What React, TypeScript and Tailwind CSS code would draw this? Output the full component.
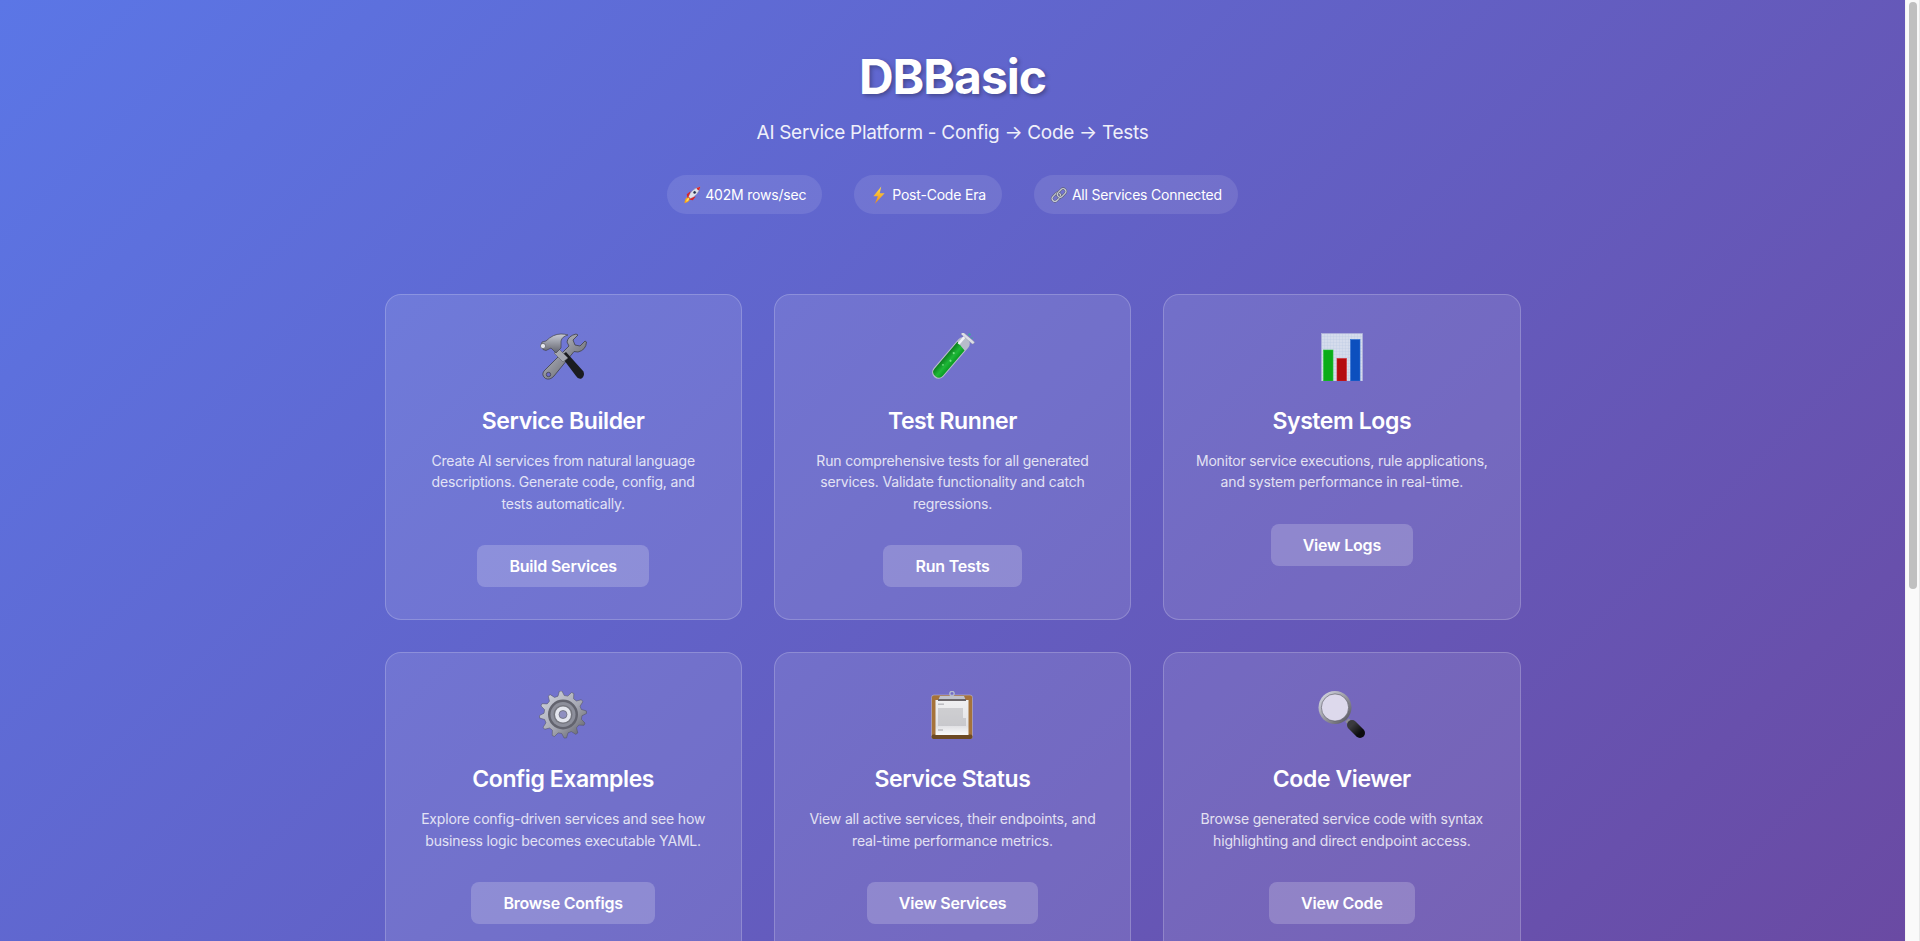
const badges = [
  { icon: <RocketIcon />, label: "402M rows/sec" },
  { icon: <BoltIcon />, label: "Post-Code Era" },
  { icon: <LinkIcon />, label: "All Services Connected" },
];

const cards = [
  {
    icon: <ToolsIcon />,
    title: "Service Builder",
    text: "Create AI services from natural language descriptions. Generate code, config, and tests automatically.",
    action: "Build Services",
  },
  {
    icon: <TubeIcon />,
    title: "Test Runner",
    text: "Run comprehensive tests for all generated services. Validate functionality and catch regressions.",
    action: "Run Tests",
  },
  {
    icon: <ChartIcon />,
    title: "System Logs",
    text: "Monitor service executions, rule applications, and system performance in real-time.",
    action: "View Logs",
  },
  {
    icon: <GearIcon />,
    title: "Config Examples",
    text: "Explore config-driven services and see how business logic becomes executable YAML.",
    action: "Browse Configs",
  },
  {
    icon: <ClipboardIcon />,
    title: "Service Status",
    text: "View all active services, their endpoints, and real-time performance metrics.",
    action: "View Services",
  },
  {
    icon: <SearchIcon />,
    title: "Code Viewer",
    text: "Browse generated service code with syntax highlighting and direct endpoint access.",
    action: "View Code",
  },
];

function ToolsIcon() {
  return (
    <svg viewBox="0 0 48 48" className="h-12 w-12">
      <defs>
        <linearGradient id="steel" x1="0" y1="0" x2="1" y2="1">
          <stop offset="0" stopColor="#d8dbe2" />
          <stop offset="0.5" stopColor="#8d8f98" />
          <stop offset="1" stopColor="#55565e" />
        </linearGradient>
        <linearGradient id="hammerHead" x1="0" y1="0" x2="0" y2="1">
          <stop offset="0" stopColor="#c9ccd6" />
          <stop offset="1" stopColor="#5f616b" />
        </linearGradient>
      </defs>
      <path
        d="M7 36 L30 13 L28 9 Q29 3 37 1 L39 2 L34 7 L36 12 L41 13 L46 8 L47.5 9 Q47 17 39 19 L35 18.5 L15 43 Q11 47.5 6.5 45.5 Q2 42 5 38 Z"
        fill="url(#steel)"
        stroke="#3f4048"
        strokeWidth="0.8"
      />
      <circle cx="9.5" cy="41.5" r="2.2" fill="#6c6aca" stroke="#3f4048" strokeWidth="0.8" />
      <path d="M22 23 L27 19 L44.5 38.5 Q46 43 42.5 45.5 Q39 46.5 37 43 Z" fill="#1b1c20" />
      <path d="M15 20 L20 16 L29 25 L24 29 Z" fill="#a5a7b0" stroke="#55565e" strokeWidth="0.5" />
      <path
        d="M3 9 L7 8 Q14 1 22 1 Q26 1 29 2 Q23 3.5 22 8 L22 15 L17 20 L12 15 L7 17.5 L4 16.5 Q1 13 3 9 Z"
        fill="url(#hammerHead)"
        stroke="#43444c"
        strokeWidth="0.7"
      />
      <circle cx="4" cy="13" r="2.6" fill="#e5e7ee" stroke="#4a4b53" strokeWidth="0.6" />
    </svg>
  );
}

function TubeIcon() {
  return (
    <svg viewBox="0 0 48 48" className="h-12 w-12">
      <defs>
        <linearGradient id="liquid" x1="0" y1="0" x2="1" y2="0">
          <stop offset="0" stopColor="#0b7f1e" />
          <stop offset="0.55" stopColor="#1fb838" />
          <stop offset="1" stopColor="#0a9c23" />
        </linearGradient>
      </defs>
      <g transform="translate(39.5 5.5) rotate(40.5)">
        <rect x="-6.5" y="0" width="13" height="51" rx="6.5" fill="#b7bccb" />
        <rect x="-8" y="-2" width="16" height="3" rx="1.2" fill="#dcdee6" stroke="#8f92a0" strokeWidth="0.4" />
        <path d="M-5.5 9 L5.5 11 L5.5 44 Q5.5 49.5 0 49.5 Q-5.5 49.5 -5.5 44 Z" fill="url(#liquid)" />
        <circle cx="-1" cy="20" r="1.1" fill="#74e083" />
        <circle cx="1.5" cy="28" r="1.1" fill="#74e083" />
        <circle cx="-1.5" cy="36" r="0.9" fill="#74e083" />
        <rect x="-4.5" y="1" width="2.4" height="9" fill="#f0f1f6" />
      </g>
      <circle cx="41.5" cy="1.5" r="1.2" fill="#3aa89a" />
      <circle cx="44" cy="5" r="0.8" fill="#3aa89a" />
    </svg>
  );
}

function ChartIcon() {
  return (
    <svg viewBox="0 0 48 48" className="h-12 w-12">
      <defs>
        <pattern id="chartGrid" width="3" height="3" patternUnits="userSpaceOnUse">
          <rect width="3" height="3" fill="#d5dcec" />
          <path d="M0 0H3M0 0V3" stroke="#bdcae2" strokeWidth="0.7" />
        </pattern>
      </defs>
      <rect x="3.5" y="0.5" width="41" height="47.5" fill="url(#chartGrid)" stroke="#b4b8dc" strokeWidth="0.6" />
      <rect x="5.5" y="17" width="9.5" height="31" fill="#0bac19" stroke="#27c638" strokeWidth="0.6" />
      <rect x="19" y="25.5" width="9.5" height="22.5" fill="#b40b0f" stroke="#d3262c" strokeWidth="0.6" />
      <rect x="32.5" y="6.5" width="9.5" height="41.5" fill="#0c4fbe" stroke="#2c6fd6" strokeWidth="0.6" />
    </svg>
  );
}

function gearPath() {
  const cx = 24;
  const cy = 23.5;
  const points: string[] = [];
  const teeth = 12;
  for (let i = 0; i < teeth; i++) {
    const a = (i / teeth) * Math.PI * 2 - 0.1;
    const step = (Math.PI * 2) / teeth;
    const pts: [number, number][] = [
      [a - step * 0.32, 19],
      [a - step * 0.1, 23.6],
      [a + step * 0.1, 23.6],
      [a + step * 0.32, 19],
    ];
    for (const [angle, r] of pts) {
      points.push(`${(cx + Math.cos(angle) * r).toFixed(2)} ${(cy + Math.sin(angle) * r).toFixed(2)}`);
    }
  }
  return `M${points.join(" L")} Z`;
}

function GearIcon() {
  return (
    <svg viewBox="0 0 48 48" className="h-12 w-12">
      <defs>
        <linearGradient id="gearBody" x1="0" y1="0" x2="1" y2="1">
          <stop offset="0" stopColor="#d5d8e2" />
          <stop offset="0.55" stopColor="#a7a9b4" />
          <stop offset="1" stopColor="#55565f" />
        </linearGradient>
      </defs>
      <path d={gearPath()} fill="url(#gearBody)" stroke="#4e4f5a" strokeWidth="0.5" />
      <circle cx="24" cy="23.5" r="15" fill="#62636e" />
      <circle cx="24" cy="23.5" r="12.5" fill="#8d8f9b" />
      <circle cx="24" cy="23.5" r="9.5" fill="#75767f" />
      <circle cx="24" cy="23.5" r="8" fill="#e4e6ee" />
      <circle cx="24" cy="23.5" r="4" fill="#8f8fc0" stroke="#6d6e7a" strokeWidth="0.8" />
    </svg>
  );
}

function ClipboardIcon() {
  return (
    <svg viewBox="0 0 48 48" className="h-12 w-12">
      <defs>
        <linearGradient id="paper" x1="0" y1="0" x2="0" y2="1">
          <stop offset="0" stopColor="#f0f0f2" />
          <stop offset="0.75" stopColor="#e2e2e5" />
          <stop offset="1" stopColor="#fafafa" />
        </linearGradient>
      </defs>
      <rect x="3.5" y="4" width="41" height="44" rx="2.5" fill="#a5723a" stroke="#b7b3d8" strokeWidth="0.6" />
      <rect x="3.5" y="43.5" width="41" height="4.5" rx="2" fill="#6d4a24" />
      <rect x="7.5" y="9" width="33" height="35" fill="url(#paper)" />
      <g fill="#a3a3a8">
        <rect x="10" y="12.5" width="6" height="1.4" opacity="0.7" />
        <rect x="10" y="17" width="25" height="10" opacity="0.4" />
        <rect x="10" y="27" width="28" height="8" opacity="0.4" />
        <rect x="10" y="38" width="5" height="2" opacity="0.5" />
      </g>
      <circle cx="24" cy="2.6" r="2.2" fill="none" stroke="#b5bdd0" strokeWidth="1.3" />
      <path d="M10 9.5 L12 5 H36 L38 9.5 Z" fill="#c0c2cc" />
      <rect x="10" y="8" width="28" height="2" fill="#6a6568" />
    </svg>
  );
}

function SearchIcon() {
  return (
    <svg viewBox="0 0 48 48" className="h-12 w-12">
      <defs>
        <linearGradient id="lensRing" x1="0" y1="0" x2="1" y2="1">
          <stop offset="0" stopColor="#dfe3ee" />
          <stop offset="0.5" stopColor="#9a9aa2" />
          <stop offset="1" stopColor="#4c4c54" />
        </linearGradient>
        <linearGradient id="handle" x1="0" y1="0" x2="1" y2="1">
          <stop offset="0" stopColor="#3a3a3e" />
          <stop offset="1" stopColor="#0c0c0e" />
        </linearGradient>
      </defs>
      <line x1="29" y1="29" x2="33" y2="33" stroke="#8e8e96" strokeWidth="5" />
      <line x1="34" y1="34" x2="42" y2="42" stroke="url(#handle)" strokeWidth="10" strokeLinecap="round" />
      <circle cx="17" cy="16.5" r="16.5" fill="url(#lensRing)" />
      <circle cx="17" cy="16.5" r="13.6" fill="#ddd9ec" stroke="#55555e" strokeWidth="0.6" />
    </svg>
  );
}

function RocketIcon() {
  return (
    <svg viewBox="0 0 48 48" className="h-[18px] w-[18px]">
      <path d="M4 46 Q4 34 13 28 L20 35 Q14 44 4 46 Z" fill="#f6a21e" />
      <path d="M8 42 Q9 35 14 31 L17 34 Q14 40 8 42 Z" fill="#fbe15a" />
      <path d="M10 22 L20 14 L18 28 L12 32 Z" fill="#d9252a" />
      <path d="M26 38 L34 28 L20 30 L16 36 Z" fill="#d9252a" />
      <path d="M15 28 Q22 8 46 2 Q40 26 20 33 Z" fill="#dfe3ec" stroke="#8b8f9e" strokeWidth="0.8" />
      <path d="M36 5 L46 2 L43 12 Q38 11 36 5 Z" fill="#d9252a" />
      <circle cx="31" cy="17" r="4.5" fill="#26324f" stroke="#f2f3f7" strokeWidth="1.6" />
    </svg>
  );
}

function BoltIcon() {
  return (
    <svg viewBox="0 0 48 48" className="h-[18px] w-[18px]">
      <defs>
        <linearGradient id="bolt" x1="0" y1="0" x2="0" y2="1">
          <stop offset="0" stopColor="#ffe14d" />
          <stop offset="1" stopColor="#f08a13" />
        </linearGradient>
      </defs>
      <path d="M30 1 L9 27 L21 27 L13 47 L39 19 L26 19 Z" fill="url(#bolt)" />
    </svg>
  );
}

function LinkIcon() {
  return (
    <svg viewBox="0 0 48 48" className="h-[18px] w-[18px]" fill="none">
      <rect x="4" y="22" width="26" height="15" rx="7.5" transform="rotate(-45 17 29.5)" stroke="#5f6270" strokeWidth="6" />
      <rect x="4" y="22" width="26" height="15" rx="7.5" transform="rotate(-45 17 29.5)" stroke="#c7cbd6" strokeWidth="3" />
      <rect x="18" y="11" width="26" height="15" rx="7.5" transform="rotate(-45 31 18.5)" stroke="#5f6270" strokeWidth="6" />
      <rect x="18" y="11" width="26" height="15" rx="7.5" transform="rotate(-45 31 18.5)" stroke="#c7cbd6" strokeWidth="3" />
    </svg>
  );
}

export default function App() {
  return (
    <div className="flex h-screen overflow-hidden font-['Inter',sans-serif] text-white">
      <main className="flex-1 overflow-hidden bg-[linear-gradient(135deg,#5b76e6,#6a4aa3)]">
        <div className="mx-auto max-w-[1200px] px-8 pt-[53px]">
          <header className="mb-20 text-center">
            <h1 className="mb-[17px] text-5xl leading-[48px] font-bold tracking-[-1px] [text-shadow:2px_2px_4px_rgba(0,0,0,0.3)]">
              DBBasic
            </h1>
            <p className="text-[19px] leading-[30px] tracking-[-0.3px] opacity-90">AI Service Platform - Config → Code → Tests</p>
            <div className="mt-[27px] flex justify-center gap-8">
              {badges.map((badge) => (
                <div
                  key={badge.label}
                  className="flex h-[39px] items-center gap-1 rounded-[20px] bg-white/10 px-4 text-sm tracking-[-0.2px]"
                >
                  {badge.icon}
                  <span>{badge.label}</span>
                </div>
              ))}
            </div>
          </header>

          <section className="grid grid-cols-3 gap-8">
            {cards.map((card) => (
              <div key={card.title} className="rounded-2xl border border-white/20 bg-white/10 p-8 text-center">
                <div className="mb-6 flex justify-center pt-1.5">{card.icon}</div>
                <h3 className="mb-[13px] text-[23px] leading-8 font-semibold tracking-[-0.4px]">{card.title}</h3>
                <p className="-mx-[2px] mb-[31px] text-sm leading-[21.4px] tracking-[-0.17px] opacity-80">{card.text}</p>
                <button className="inline-block rounded-lg bg-white/20 px-8 py-2 align-top text-base leading-[26px] font-semibold tracking-[-0.2px]">
                  {card.action}
                </button>
              </div>
            ))}
          </section>
        </div>
      </main>

      <aside className="w-[15px] shrink-0 border-x border-l-[#f4f4f4] border-r-[#e8e8e8] bg-[#fafafa] pt-0.5 pl-[3px]">
        <div className="h-[587px] w-2 rounded-full bg-[#c0c0c0]" />
      </aside>
    </div>
  );
}
